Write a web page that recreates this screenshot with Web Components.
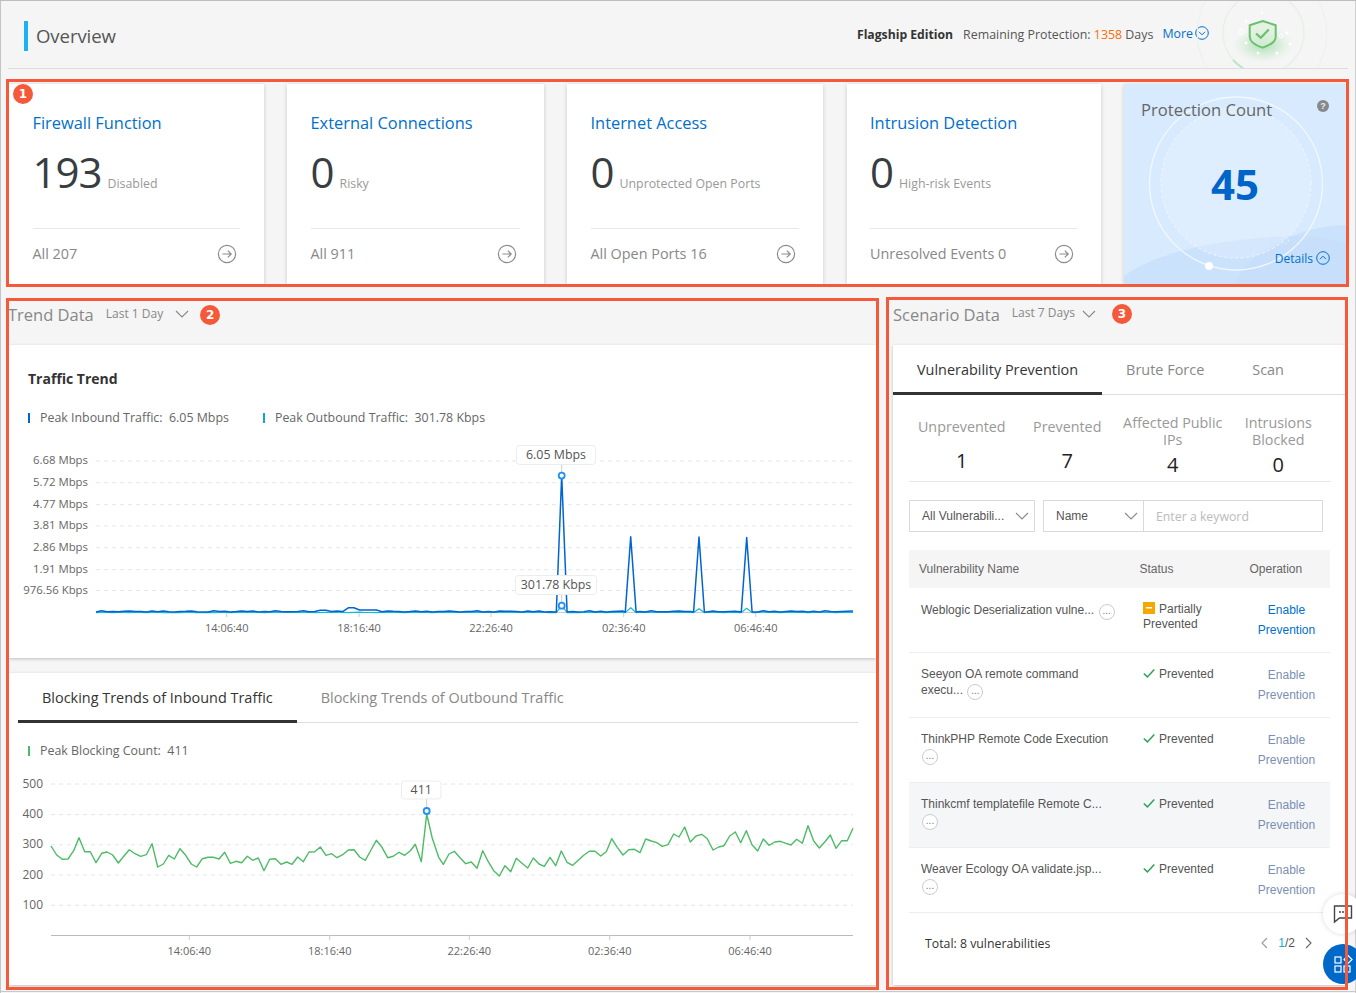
<!DOCTYPE html>
<html lang="en">
<head>
<meta charset="utf-8">
<title>Overview</title>
<style>
  html, body { margin: 0; padding: 0; overflow: hidden; background: #f5f5f5; }
</style>
</head>
<body>
<ov-page>
  <ov-header></ov-header>

  <ov-frame style="margin: 10px 7px 0 5px; height: 208px;" badge="1">
    <ov-stat-row>
      <ov-stat-card heading="Firewall Function" value="193" label="Disabled" foot="All 207"></ov-stat-card>
      <ov-stat-card heading="External Connections" value="0" label="Risky" foot="All 911"></ov-stat-card>
      <ov-stat-card heading="Internet Access" value="0" label="Unprotected Open Ports" foot="All Open Ports 16"></ov-stat-card>
      <ov-stat-card heading="Intrusion Detection" value="0" label="High-risk Events" foot="Unresolved Events 0"></ov-stat-card>
      <ov-protection-card value="45"></ov-protection-card>
    </ov-stat-row>
  </ov-frame>

  <ov-columns>
    <ov-frame style="width: 873px; height: 692px; margin-top: 1px;">
      <ov-trend-section></ov-trend-section>
    </ov-frame>
    <ov-frame style="width: 462px; height: 693px;">
      <ov-scenario-section></ov-scenario-section>
    </ov-frame>
  </ov-columns>

  <ov-fabs></ov-fabs>
</ov-page>

<script>
/**
 * Small shared icon helpers
 */
const chevronDown = (color = '#888', w = 14) => `
  <svg width="${w}" height="8" viewBox="0 0 14 8" fill="none"><path d="M1 1l6 6 6-6" stroke="${color}" stroke-width="1.1"/></svg>`;

const circleChevron = (dir, color = '#0070cc') => `
  <svg width="14" height="14" viewBox="0 0 14 14" fill="none">
    <circle cx="7" cy="7" r="6.3" stroke="${color}" stroke-width="1"/>
    <path d="${dir === 'up' ? 'M4 8.2l3-3 3 3' : 'M4 5.8l3 3 3-3'}" stroke="${color}" stroke-width="1"/>
  </svg>`;

const arrowCircle = `
  <svg width="20" height="20" viewBox="0 0 20 20" fill="none">
    <circle cx="10" cy="10" r="8.6" stroke="#8c8c8c" stroke-width="1.2"/>
    <path d="M5.4 10h8.8M10.8 6.6l3.4 3.4-3.4 3.4" stroke="#8c8c8c" stroke-width="1.2"/>
  </svg>`;

/**
 * ov-page
 * Outer box of the console page
 */
class OvPage extends HTMLElement {
  constructor() {
    super();
    this.attachShadow({ mode: 'open' });
  }

  connectedCallback() {
    this.shadowRoot.innerHTML = `
      <style>
        :host {
          display: block;
          position: relative;
          box-sizing: border-box;
          width: 1356px;
          height: 993px;
          overflow: hidden;
          background: #f5f5f5;
          border-top: 1px solid #bdbdbd;
          border-left: 1px solid #c4c4c4;
          font-family: "Open Sans", "Noto Sans", sans-serif;
          color: #555;
        }
        .edge {
          position: absolute;
          right: 0;
          top: 0;
          bottom: 0;
          width: 1px;
          background: #d0d0d0;
        }
        .floor {
          position: absolute;
          left: 0;
          right: 0;
          bottom: 1px;
          height: 1px;
          background: #c8c8c8;
        }
      </style>
      <slot></slot>
      <div class="edge"></div>
      <div class="floor"></div>
    `;
  }
}

/**
 * ov-header
 * Page title, edition info and the shield mark
 */
class OvHeader extends HTMLElement {
  constructor() {
    super();
    this.attachShadow({ mode: 'open' });
  }

  connectedCallback() {
    this.shadowRoot.innerHTML = `
      <style>
        :host {
          display: flex;
          align-items: center;
          box-sizing: border-box;
          height: 68px;
          margin: 0 8px 0 7px;
          padding: 0 21px 0 16px;
          border-bottom: 1px solid #dcdcdc;
          overflow: hidden;
        }
        .bar { width: 4px; height: 30px; background: #1ab2f5; margin-right: 8px; margin-top: 3px; }
        h1 { margin: 3px 0 0; font-size: 18.6px; line-height: 30px; font-weight: 400; color: #555; letter-spacing: -.1px; }
        .info { margin-left: auto; display: flex; align-items: center; font-size: 12.4px; margin-top: -1px; color: #555; white-space: nowrap; }
        b { color: #333; font-weight: 700; margin-right: 10px; font-size: 12.2px; }
        .num { color: #ff6a00; }
        .more { color: #0070cc; margin: -2px 0 0 9px; display: flex; align-items: center; gap: 2px; }
        svg.shield { flex: none; margin-left: -12px; }
      </style>
      <div class="bar"></div>
      <h1>Overview</h1>
      <div class="info">
        <b>Flagship Edition</b>
        <span>Remaining Protection: <span class="num">1358</span> Days</span>
        <span class="more">More${circleChevron('down')}</span>
      </div>
      <svg class="shield" width="130" height="67" viewBox="1196 1 130 67" fill="none">
        <defs>
          <radialGradient id="glow">
            <stop offset="0" stop-color="#79cf86" stop-opacity=".6"/>
            <stop offset=".55" stop-color="#a6e0ad" stop-opacity=".35"/>
            <stop offset="1" stop-color="#c8eccb" stop-opacity="0"/>
          </radialGradient>
        </defs>
        <circle cx="1261" cy="33" r="65" stroke="#ecf0ec" stroke-width="1"/>
        <circle cx="1262.500" cy="33" r="40.500" stroke="#e6f2e6" stroke-width="1.500"/>
        <path d="M1232 60A40.500 40.500 0 0 0 1242 68" stroke="#bfe5c4" stroke-width="2"/>
        <ellipse cx="1262" cy="45" rx="31" ry="18" fill="url(#glow)"/>
        <path d="M1261.700 21l13 4.200v11.200c0 5.200-5.400 8.800-13 11.200-7.600-2.400-13-6-13-11.200V25.200z" fill="#dcf1dc" fill-opacity=".7" stroke="#6cbf6c" stroke-width="2"/>
        <path d="M1255 33.500l4.800 4.300 8-8.300" stroke="#6cbf6c" stroke-width="2.200"/>
        <g fill="#fff">
          <circle cx="1245" cy="21" r="1.500"/><circle cx="1261" cy="13" r="1.200"/>
          <circle cx="1286" cy="33" r="1.500"/><circle cx="1289" cy="44" r="1.500"/>
          <circle cx="1245" cy="43" r="1.500"/><circle cx="1257" cy="53" r="1.500"/><circle cx="1276" cy="53" r="1.500"/>
        </g>
        <circle cx="1240" cy="32" r="2.500" stroke="#fff"/>
        <circle cx="1280" cy="36" r="1.800" stroke="#fff"/>
      </svg>
    `;
  }
}

/**
 * ov-frame
 * Red annotation frame. The line lies over everything inside and over the floating buttons.
 *
 * Attributes:
 * - badge: number shown in the top left corner (optional)
 */
class OvFrame extends HTMLElement {
  constructor() {
    super();
    this.attachShadow({ mode: 'open' });
  }

  connectedCallback() {
    const badge = this.getAttribute('badge');
    this.shadowRoot.innerHTML = `
      <style>
        :host { display: block; position: relative; box-sizing: border-box; }
        .body { box-sizing: border-box; height: 100%; padding: 3px; overflow: hidden; }
        .line { position: absolute; inset: 0; border: 3px solid #f4593a; z-index: 3; pointer-events: none; }
        ov-badge { position: absolute; left: 7px; top: 5px; z-index: 3; }
      </style>
      <div class="body"><slot></slot></div>
      <div class="line"></div>
      ${badge ? `<ov-badge>${badge}</ov-badge>` : ''}
    `;
  }
}

/**
 * ov-badge
 * Round numbered annotation
 */
class OvBadge extends HTMLElement {
  constructor() {
    super();
    this.attachShadow({ mode: 'open' });
  }

  connectedCallback() {
    this.shadowRoot.innerHTML = `
      <style>
        :host {
          display: inline-flex;
          align-items: center;
          justify-content: center;
          flex: none;
          width: 20px;
          height: 20px;
          border-radius: 50%;
          background: #f4593a;
          color: #fff;
          font: 700 12px "DejaVu Sans", sans-serif;
        }
      </style>
      <slot></slot>
    `;
  }
}

class OvStatRow extends HTMLElement {
  constructor() {
    super();
    this.attachShadow({ mode: 'open' });
  }

  connectedCallback() {
    this.shadowRoot.innerHTML = `
      <style>
        :host {
          display: grid;
          grid-template-columns: 254.5px 256.5px 256px 254px 222px;
          column-gap: 23.5px;
          padding-top: 2px;
          height: 200px;
        }
      </style>
      <slot></slot>
    `;
  }
}

/**
 * ov-stat-card
 *
 * Attributes:
 * - heading, value, label, foot
 */
class OvStatCard extends HTMLElement {
  constructor() {
    super();
    this.attachShadow({ mode: 'open' });
  }

  connectedCallback() {
    const get = name => this.getAttribute(name) || '';
    this.shadowRoot.innerHTML = `
      <style>
        :host {
          display: flex;
          flex-direction: column;
          box-sizing: border-box;
          height: 200px;
          padding: 0 24px 0 23.5px;
          background: #fff;
          box-shadow: 0 1px 4px rgba(0, 0, 0, .18);
        }
        .title { margin-top: 29px; font-size: 16.4px; line-height: 20px; color: #0070cc; white-space: nowrap; }
        .row { display: flex; align-items: baseline; gap: 6px; margin-top: 11px; height: 56px; }
        .value { font-size: 42px; line-height: 56px; color: #373d41; letter-spacing: -1px; }
        .label { font-size: 12.35px; color: #999; }
        .foot {
          display: flex;
          align-items: center;
          justify-content: space-between;
          margin-top: auto;
          height: 56px;
          padding: 0 3px 6px 0;
          box-sizing: border-box;
          border-top: 1px solid #e8e8e8;
          font-size: 14.4px;
          color: #888;
        }
        svg { display: block; }
      </style>
      <div class="title">${get('heading')}</div>
      <div class="row"><span class="value">${get('value')}</span><span class="label">${get('label')}</span></div>
      <div class="foot"><span>${get('foot')}</span>${arrowCircle}</div>
    `;
  }
}

/**
 * ov-protection-card
 * Blue card with rings around the count
 */
class OvProtectionCard extends HTMLElement {
  constructor() {
    super();
    this.attachShadow({ mode: 'open' });
  }

  connectedCallback() {
    this.shadowRoot.innerHTML = `
      <style>
        :host {
          display: block;
          position: relative;
          box-sizing: border-box;
          height: 200px;
          overflow: hidden;
          background: #d8eafe;
          box-shadow: 0 1px 4px rgba(0, 0, 0, .18);
        }
        svg.bg { position: absolute; left: 0; top: 0; }
        .content { position: relative; display: flex; flex-direction: column; height: 100%; }
        .top { display: flex; justify-content: space-between; padding: 16px 17px 0; }
        .title { font-size: 16.6px; line-height: 20px; color: #666; }
        .help {
          width: 12px; height: 12px; margin: 0; border-radius: 50%;
          background: #888; color: #e4f0ff; font: 700 9px/12px "Liberation Sans", sans-serif; text-align: center;
        }
        .count { margin-top: 39px; height: 50px; text-align: center; font-size: 42px; line-height: 50px; font-weight: 700; color: #0064c8; }
        .details {
          display: flex; align-items: center; justify-content: flex-end; gap: 3px;
          margin-top: 41px; padding-right: 16px; height: 16px; font-size: 12px; color: #0070cc;
        }
        .details svg { display: block; }
      </style>
      <svg class="bg" width="222" height="200" viewBox="1124 84 222 200" fill="none">
        <path d="M1124 284v-8c30-22 90-38 170-40 20 0 40 2 52 8v40z" fill="#cbe2fc"/>
        <path d="M1235 284c10-30 60-58 111-59v59z" fill="#c4defb" fill-opacity=".7"/>
        <circle cx="1236" cy="183" r="75" fill="#fff" fill-opacity=".2"/>
        <circle cx="1236" cy="183.500" r="86.500" stroke="#f2f8ff" stroke-width="1.300"/>
        <circle cx="1236" cy="183" r="75" stroke="#f2f8ff" stroke-width="1" stroke-dasharray="3 2.500"/>
        <circle cx="1209" cy="266" r="4" fill="#fff"/>
        <circle cx="1285" cy="240" r="3.500" stroke="#e6f1ff" stroke-dasharray="2 1.500"/>
      </svg>
      <div class="content">
        <div class="top"><span class="title">Protection Count</span><span class="help">?</span></div>
        <div class="count">${this.getAttribute('value') || ''}</div>
        <div class="details"><span>Details</span>${circleChevron('up')}</div>
      </div>
    `;
  }
}

class OvColumns extends HTMLElement {
  constructor() {
    super();
    this.attachShadow({ mode: 'open' });
  }

  connectedCallback() {
    this.shadowRoot.innerHTML = `
      <style>
        :host { display: flex; align-items: flex-start; gap: 7px; margin: 10px 0 0 5px; }
      </style>
      <slot></slot>
    `;
  }
}

/**
 * ov-section-head
 * Gray strip with a title, a period select and a numbered badge
 *
 * Attributes:
 * - heading, period, badge
 * - chevron-gap, badge-gap: spacing around the chevron
 * - strip, lift: strip height and how far its content sits above the middle
 * - period-y, badge-y: nudge of the period and the badge
 */
class OvSectionHead extends HTMLElement {
  constructor() {
    super();
    this.attachShadow({ mode: 'open' });
  }

  connectedCallback() {
    const attr = (name, fallback) => this.getAttribute(name) || fallback;
    this.shadowRoot.innerHTML = `
      <style>
        :host {
          display: flex; align-items: center; box-sizing: border-box; white-space: nowrap;
          height: ${attr('strip', '44')}px; padding-bottom: ${attr('lift', '16')}px;
        }
        .title { font-size: 16.5px; color: #888; }
        .period { margin: ${attr('period-y', '-2')}px 0 0 12px; font-size: 12px; color: #888; }
        svg { margin: 0 ${attr('badge-gap', '14')}px 0 ${attr('chevron-gap', '12')}px; }
        ov-badge { margin-top: ${attr('badge-y', '0')}px; }
      </style>
      <span class="title">${this.getAttribute('heading')}</span>
      <span class="period">${this.getAttribute('period')}</span>
      ${chevronDown('#888')}
      <ov-badge>${this.getAttribute('badge')}</ov-badge>
    `;
  }
}

/**
 * ov-tabs
 *
 * Attributes:
 * - items: labels separated by |, the first one is active
 * - pad: horizontal padding of a tab
 */
class OvTabs extends HTMLElement {
  constructor() {
    super();
    this.attachShadow({ mode: 'open' });
  }

  connectedCallback() {
    const pad = this.getAttribute('pad') || '24';
    const items = (this.getAttribute('items') || '').split('|');
    this.shadowRoot.innerHTML = `
      <style>
        :host { display: flex; box-sizing: border-box; height: 50px; border-bottom: 1px solid #ddd; }
        .tab {
          box-sizing: border-box; height: 50px; padding: 0 ${pad}px; font-size: 14.45px; line-height: 49px;
          color: #888; white-space: nowrap;
        }
        .tab.on { color: #333; border-bottom: 3px solid #333; }
      </style>
      ${items.map((t, i) => `<div class="tab ${i === 0 ? 'on' : ''}">${t}</div>`).join('')}
    `;
  }
}

/**
 * ov-legend
 * Peak readings over a chart
 *
 * Attributes:
 * - items: color~text pairs separated by |
 */
class OvLegend extends HTMLElement {
  constructor() {
    super();
    this.attachShadow({ mode: 'open' });
  }

  connectedCallback() {
    const items = (this.getAttribute('items') || '').split('|').map(s => s.split('~'));
    this.shadowRoot.innerHTML = `
      <style>
        :host { display: flex; gap: 34px; font-size: 12.4px; line-height: 18px; color: #666; white-space: pre; }
        .item { display: flex; align-items: center; }
        i { width: 2px; height: 10px; margin-right: 10px; }
      </style>
      ${items.map(([c, t]) => `<div class="item"><i style="background:${c}"></i><span>${t}</span></div>`).join('')}
    `;
  }
}

const polyline = (pts, color, width) =>
  `<polyline points="${pts.map(p => p.join(',')).join(' ')}" stroke="${color}" stroke-width="${width}" fill="none" stroke-linejoin="round"/>`;

const marker = (x, y) =>
  `<circle cx="${x}" cy="${y}" r="3" fill="#fff" stroke="#1f90f5" stroke-width="1.800"/>`;

const tip = (x0, x1, y0, y1, text) => `
  <rect x="${x0}" y="${y0}" width="${x1 - x0}" height="${y1 - y0}" rx="3" fill="#fff" stroke="#ececec"/>
  <text x="${(x0 + x1) / 2}" y="${y1 - 5.5}" text-anchor="middle" fill="#555" font-size="12.4">${text}</text>`;

/**
 * ov-traffic-chart
 * SVG whose viewBox keeps the reference coordinates of the plot
 */
class OvTrafficChart extends HTMLElement {
  constructor() {
    super();
    this.attachShadow({ mode: 'open' });
  }

  _series(base, amp, spikes, seed) {
    const out = [];
    const step = (853 - 96) / 135;
    for (let i = 0; i <= 135; i++) {
      const x = 96 + i * step;
      if (spikes.some(s => Math.abs(s[0] - x) < 6.5)) continue;
      const wob = Math.abs(Math.sin(i * seed) * Math.sin(i * 0.61 + 1));
      let y = base - wob * amp;
      // small burst of traffic between 17:50 and 19:30
      if (base < 612.5 && amp > 1) {
        if (x > 345 && x < 354) y = 607.8;
        else if (x >= 354 && x < 380) y = 610;
        else if (x > 320 && x < 326) y = 610.3;
      }
      out.push([+x.toFixed(1), +y.toFixed(1)]);
    }
    spikes.forEach(([x, top]) => {
      out.push([x - 5.4, base], [x, top], [x + 5.4, base]);
    });
    return out.sort((a, b) => a[0] - b[0]);
  }

  connectedCallback() {
    const grid = [461, 482.7, 504.7, 526, 547.7, 569.7, 590.5];
    const labels = ['6.68 Mbps', '5.72 Mbps', '4.77 Mbps', '3.81 Mbps', '2.86 Mbps', '1.91 Mbps', '976.56 Kbps'];
    const ticks = [[226.7, '14:06:40'], [359, '18:16:40'], [491, '22:26:40'], [623.7, '02:36:40'], [755.7, '06:46:40']];
    const inbound = this._series(612, 1.3, [[561.7, 475.6], [630.7, 536.7], [699, 537], [746.7, 537.5]], 1.73);
    const outbound = this._series(612.6, 0.4, [[561.7, 605.7], [630.7, 607.7], [699, 608.7], [746.7, 608.3]], 2.1);

    this.shadowRoot.innerHTML = `
      <style>
        :host { display: block; height: 195px; }
        svg { display: block; font-family: "Open Sans", "Noto Sans", sans-serif; font-size: 11.4px; }
      </style>
      <svg width="867" height="195" viewBox="9 445 867 195">
        ${grid.map(y => `<line x1="96" x2="853" y1="${y}" y2="${y}" stroke="#e6e6e6" stroke-dasharray="4 4"/>`).join('')}
        ${grid.map((y, i) => `<text x="88" y="${y + 3.4}" text-anchor="end" fill="#666">${labels[i]}</text>`).join('')}
        <line x1="96" x2="853" y1="612.500" y2="612.500" stroke="#ccc"/>
        ${ticks.map(([x, t]) => `<line x1="${x}" x2="${x}" y1="612" y2="617" stroke="#ccc"/><text x="${x}" y="632" text-anchor="middle" fill="#666" font-size="11">${t}</text>`).join('')}
        <line x1="561.700" x2="561.700" y1="464" y2="476" stroke="#ccc"/>
        <line x1="561.700" x2="561.700" y1="594" y2="606" stroke="#ccc"/>
        ${polyline(outbound, '#10bdd0', 1.200)}
        ${polyline(inbound, '#0064d2', 1.500)}
        ${marker(561.7, 475.6)}
        ${marker(561.7, 605.7)}
        ${tip(516.5, 595.5, 445.5, 464.5, '6.05 Mbps')}
        ${tip(515.5, 596.5, 575.5, 594.5, '301.78 Kbps')}
      </svg>
    `;
  }
}

/**
 * ov-block-chart
 * Blocking count line, points read off the reference
 */
class OvBlockChart extends HTMLElement {
  constructor() {
    super();
    this.attachShadow({ mode: 'open' });
  }

  connectedCallback() {
    const left = [153,558,170,585,187,598,204,597,221,572,237,533,254,575,271,575,288,608,305,580,321,576,338,585,355,609,372,588,388,569,405,581,422,589,439,584,456,551,473,621,490,612,506,586,523,597,540,566,557,586,574,612,590,621,607,596,624,592,641,592,657,597,674,577,691,610,708,604,725,608,742,589,758,601,775,594,792,632,809,598,826,596,843,613,860,606,876,613,893,591,910,605,927,576,944,575,961,561,978,586,995,581,1011,593,1028,584,1045,570,1062,569,1079,591,1096,601,1113,570,1129,541,1146,562,1163,593,1180,589,1197,577,1214,586,1231,572,1246,553,1264,605,1280,462,1297,535,1316,592];
    const right = [0,295,10,313,27,282,43,274,60,293,77,311,94,306,111,325,128,272,145,305,161,332,178,348,195,317,212,335,229,295,246,310,263,324,280,294,297,312,313,319,330,292,347,317,364,273,381,307,398,316,415,301,431,286,448,274,465,274,482,288,499,275,515,236,532,262,549,285,566,269,583,268,600,278,617,237,634,243,650,248,667,259,684,254,701,222,717,231,734,201,751,246,768,228,785,223,802,236,819,270,836,261,852,257,869,228,886,216,902,248,919,212,936,254,953,273,970,237,987,256,1004,246,1021,244,1038,250,1053,255,1070,238,1087,250,1104,197,1121,243,1138,264,1155,245,1171,225,1188,265,1205,242,1222,242,1239,205];
    const pts = [];
    for (let i = 0; i < left.length; i += 2) pts.push([+(left[i] / 3).toFixed(1), +(660 + left[i + 1] / 3).toFixed(1)]);
    for (let i = 2; i < right.length; i += 2) pts.push([+(440 + right[i] / 3).toFixed(1), +(760 + right[i + 1] / 3).toFixed(1)]);

    const grid = [[784, '500'], [814.6, '400'], [844.8, '300'], [875, '200'], [905.3, '100']];
    const ticks = [[189.3, '14:06:40'], [329.7, '18:16:40'], [469.3, '22:26:40'], [609.7, '02:36:40'], [750, '06:46:40']];

    this.shadowRoot.innerHTML = `
      <style>
        :host { display: block; height: 190px; }
        svg { display: block; font-family: "Open Sans", "Noto Sans", sans-serif; font-size: 12px; }
      </style>
      <svg width="867" height="190" viewBox="9 775 867 190">
        ${grid.map(([y]) => `<line x1="51" x2="853" y1="${y}" y2="${y}" stroke="#e6e6e6" stroke-dasharray="4 4"/>`).join('')}
        ${grid.map(([y, t]) => `<text x="43" y="${y + 3.6}" text-anchor="end" fill="#666">${t}</text>`).join('')}
        <line x1="51" x2="853" y1="935.500" y2="935.500" stroke="#bbb"/>
        ${ticks.map(([x, t]) => `<line x1="${x}" x2="${x}" y1="935" y2="940" stroke="#ccc"/><text x="${x}" y="955" text-anchor="middle" fill="#666" font-size="11">${t}</text>`).join('')}
        <line x1="426.700" x2="426.700" y1="799" y2="811" stroke="#ccc"/>
        ${polyline(pts, '#4dbb66', 1.400)}
        ${marker(426.7, 811)}
        ${tip(401.5, 441, 781, 799, '411')}
      </svg>
    `;
  }
}

/**
 * ov-trend-section
 * Left column: traffic trend and blocking trends panels
 */
class OvTrendSection extends HTMLElement {
  constructor() {
    super();
    this.attachShadow({ mode: 'open' });
  }

  connectedCallback() {
    this.shadowRoot.innerHTML = `
      <style>
        :host { display: block; }
        ov-section-head { margin-left: -1px; }
        .panel { background: #fff; box-shadow: 0 1px 3px rgba(0, 0, 0, .22); box-sizing: border-box; }
        .traffic { height: 313px; padding-top: 24px; }
        .name { margin-left: 19px; font-size: 14px; line-height: 20px; font-weight: 700; color: #333; }
        .traffic ov-legend { margin: 20px 0 18px 19px; }
        .block { height: 312px; margin-top: 15px; }
        .block ov-tabs { margin: 0 18px 0 9px; }
        .block ov-legend { margin: 19px 0 15px 19px; }
      </style>
      <ov-section-head heading="Trend Data" period="Last 1 Day" badge="2" chevron-gap="12" badge-gap="11" lift="18" badge-y="2"></ov-section-head>
      <div class="panel traffic">
        <div class="name">Traffic Trend</div>
        <ov-legend items="#0064d2~Peak Inbound Traffic:  6.05 Mbps|#13a8c9~Peak Outbound Traffic:  301.78 Kbps"></ov-legend>
        <ov-traffic-chart></ov-traffic-chart>
      </div>
      <div class="panel block">
        <ov-tabs items="Blocking Trends of Inbound Traffic|Blocking Trends of Outbound Traffic"></ov-tabs>
        <ov-legend items="#4dbb66~Peak Blocking Count:  411"></ov-legend>
        <ov-block-chart></ov-block-chart>
      </div>
    `;
  }
}

/**
 * ov-vuln-row
 * Table row of the vulnerability list
 *
 * Attributes:
 * - name, status (partial or prevented), active (blue link), hover (gray background)
 */
class OvVulnRow extends HTMLElement {
  constructor() {
    super();
    this.attachShadow({ mode: 'open' });
  }

  connectedCallback() {
    const partial = this.getAttribute('status') === 'partial';
    const icon = partial
      ? `<svg class="ic" width="12" height="12" viewBox="0 0 12 12"><rect width="12" height="12" fill="#f5a800"/><rect x="3" y="5" width="6" height="1.500" fill="#fff"/></svg>`
      : `<svg class="ic" width="12" height="11" viewBox="0 0 12 11" fill="none"><path d="M.8 5.500l3.600 3.400L11.300 1.500" stroke="#2aa25b" stroke-width="1.500"/></svg>`;
    const name = this.getAttribute('name').replace(/(\S+)$/, '<span>$1</span>');
    this.shadowRoot.innerHTML = `
      <style>
        :host {
          display: grid;
          grid-template-columns: 234px 100px 87px;
          box-sizing: border-box;
          height: 65px;
          border-bottom: 1px solid #eee;
          font: 12px/15px "Liberation Sans", Arial, sans-serif;
          color: #555;
          background: ${this.hasAttribute('hover') ? '#f5f6f8' : '#fff'};
        }
        .name { width: 197px; padding: 14px 0 0 12px; }
        .more {
          display: inline-block; width: 14px; height: 14px; margin: 2px 0 -4px 1px; border: 1px solid #ccc; border-radius: 50%;
          font-size: 10px; line-height: 11px; text-align: center; color: #777; background: #fff;
        }
        .status { padding-top: 14px; }
        .ic { vertical-align: -1px; margin-right: 4px; }
        .op { padding-top: 12px; line-height: 20px; text-align: center; color: ${this.hasAttribute('active') ? '#0070cc' : '#7b8fb0'}; }
      </style>
      <div class="name">${name} <span class="more">...</span></div>
      <div class="status">${icon}${partial ? 'Partially Prevented' : 'Prevented'}</div>
      <div class="op"><div>Enable</div><div>Prevention</div></div>
    `;
  }
}

/**
 * ov-scenario-section
 * Right column: tabs, counters, filters and the vulnerability table
 */
class OvScenarioSection extends HTMLElement {
  constructor() {
    super();
    this.attachShadow({ mode: 'open' });
  }

  connectedCallback() {
    const stats = [['Unprevented', '1'], ['Prevented', '7'], ['Affected Public IPs', '4'], ['Intrusions Blocked', '0']];
    this.shadowRoot.innerHTML = `
      <style>
        :host { display: block; padding-left: 4px; }
        .panel {
          height: 640px; box-sizing: border-box; background: #fff;
          box-shadow: 0 1px 3px rgba(0, 0, 0, .22);
        }
        .stats {
          display: grid; grid-template-columns: repeat(4, 105.5px); box-sizing: border-box; height: 87px; margin: 0 14px 0 16px;
          padding-top: 19px; border-bottom: 1px solid #e8e8e8; text-align: center;
        }
        .stat-label { font-size: 14.3px; line-height: 17px; color: #999; }
        .one .stat-label { line-height: 26px; }
        .stat-value { font-size: 20px; color: #222; }
        .one .stat-value { line-height: 42px; }
        .two .stat-value { line-height: 34px; }
        .filters { display: flex; margin: 18px 0 0 16px; font: 12px "Liberation Sans", Arial, sans-serif; color: #555; }
        .box {
          display: flex; align-items: center; justify-content: space-between; box-sizing: border-box; height: 32px;
          padding: 0 5px 0 12px; border: 1px solid #d9d9d9;
        }
        .vuln { width: 126px; margin-right: 8px; }
        .field { width: 101px; }
        .input {
          width: 180px; margin-left: -1px; box-sizing: border-box; height: 32px; padding: 3px 12px 0; border: 1px solid #d9d9d9;
          font: 12.3px/26px "Open Sans", sans-serif; color: #bbb;
        }
        .table { margin: 18px 15px 0 16px; }
        .head {
          display: grid; grid-template-columns: 230.5px 110px 80px; height: 38px; background: #f5f5f5;
          font: 12px/38px "Liberation Sans", Arial, sans-serif; color: #666;
        }
        .head span:first-child { padding-left: 10px; }
        .foot {
          display: flex; align-items: center; justify-content: space-between; height: 60px; padding: 0 16px;
          font-size: 12.3px; color: #333; margin: 0 15px 0 16px;
        }
        .pager { display: flex; align-items: center; gap: 10px; font: 12px "Liberation Sans", sans-serif; color: #555; margin-right: 1px; }
        .pager b { font-weight: 400; color: #00b7e0; }
        .pager svg { display: block; }
      </style>
      <ov-section-head heading="Scenario Data" period="Last 7 Days" badge="3" chevron-gap="7" badge-gap="16" strip="45" lift="17" period-y="-4"></ov-section-head>
      <div class="panel">
        <ov-tabs items="Vulnerability Prevention|Brute Force|Scan"></ov-tabs>
        <div class="stats">
          ${stats.map(([l, v], i) => `<div class="${i < 2 ? 'one' : 'two'}"><div class="stat-label">${l}</div><div class="stat-value">${v}</div></div>`).join('')}
        </div>
        <div class="filters">
          <div class="box vuln"><span>All Vulnerabili...</span>${chevronDown('#888')}</div>
          <div class="box field"><span>Name</span>${chevronDown('#888')}</div>
          <div class="input">Enter a keyword</div>
        </div>
        <div class="table">
          <div class="head"><span>Vulnerability Name</span><span>Status</span><span>Operation</span></div>
          <ov-vuln-row name="Weblogic Deserialization vulne..." status="partial" active></ov-vuln-row>
          <ov-vuln-row name="Seeyon OA remote command execu..." status="prevented"></ov-vuln-row>
          <ov-vuln-row name="ThinkPHP Remote Code Execution" status="prevented"></ov-vuln-row>
          <ov-vuln-row name="Thinkcmf templatefile Remote C..." status="prevented" hover></ov-vuln-row>
          <ov-vuln-row name="Weaver Ecology OA validate.jsp..." status="prevented"></ov-vuln-row>
        </div>
        <div class="foot">
          <span>Total: 8 vulnerabilities</span>
          <span class="pager">
            <svg width="8" height="12" viewBox="0 0 8 12" fill="none"><path d="M7 1L2 6l5 5" stroke="#999" stroke-width="1.100"/></svg>
            <span><b>1</b>/2</span>
            <svg width="8" height="12" viewBox="0 0 8 12" fill="none"><path d="M1 1l5 5-5 5" stroke="#666" stroke-width="1.100"/></svg>
          </span>
        </div>
      </div>
    `;
  }
}

/**
 * ov-fabs
 * Floating chat and menu buttons, cut off by the right side of the window
 */
class OvFabs extends HTMLElement {
  constructor() {
    super();
    this.attachShadow({ mode: 'open' });
  }

  connectedCallback() {
    this.shadowRoot.innerHTML = `
      <style>
        :host { position: absolute; left: 1322px; top: 893px; z-index: 2; display: flex; flex-direction: column; gap: 10px; }
        .fab { width: 40px; height: 40px; border-radius: 50%; display: flex; align-items: center; justify-content: center; }
        .chat { background: #fff; box-shadow: 0 0 5px rgba(0, 0, 0, .15); }
        .menu { background: #0068c8; }
        svg { display: block; }
      </style>
      <div class="fab chat">
        <svg width="20" height="20" viewBox="0 0 20 20" fill="none">
          <path d="M1.500 2h17v12H6.500l-5 4z" stroke="#444" stroke-width="1.400"/>
          <g fill="#444"><circle cx="7" cy="8" r="1"/><circle cx="10" cy="8" r="1"/><circle cx="13" cy="8" r="1"/></g>
        </svg>
      </div>
      <div class="fab menu">
        <svg width="20" height="20" viewBox="0 0 20 20" fill="none" stroke="#fff" stroke-width="1.200">
          <rect x="2" y="3" width="6" height="6"/>
          <path d="M15 1.500l4 4-4 4-4-4z"/>
          <rect x="2" y="12" width="6" height="6"/>
          <rect x="11" y="12" width="6" height="6"/>
        </svg>
      </div>
    `;
  }
}

customElements.define('ov-page', OvPage);
customElements.define('ov-header', OvHeader);
customElements.define('ov-frame', OvFrame);
customElements.define('ov-badge', OvBadge);
customElements.define('ov-stat-row', OvStatRow);
customElements.define('ov-stat-card', OvStatCard);
customElements.define('ov-protection-card', OvProtectionCard);
customElements.define('ov-columns', OvColumns);
customElements.define('ov-section-head', OvSectionHead);
customElements.define('ov-tabs', OvTabs);
customElements.define('ov-legend', OvLegend);
customElements.define('ov-traffic-chart', OvTrafficChart);
customElements.define('ov-block-chart', OvBlockChart);
customElements.define('ov-trend-section', OvTrendSection);
customElements.define('ov-vuln-row', OvVulnRow);
customElements.define('ov-scenario-section', OvScenarioSection);
customElements.define('ov-fabs', OvFabs);
</script>
</body>
</html>
